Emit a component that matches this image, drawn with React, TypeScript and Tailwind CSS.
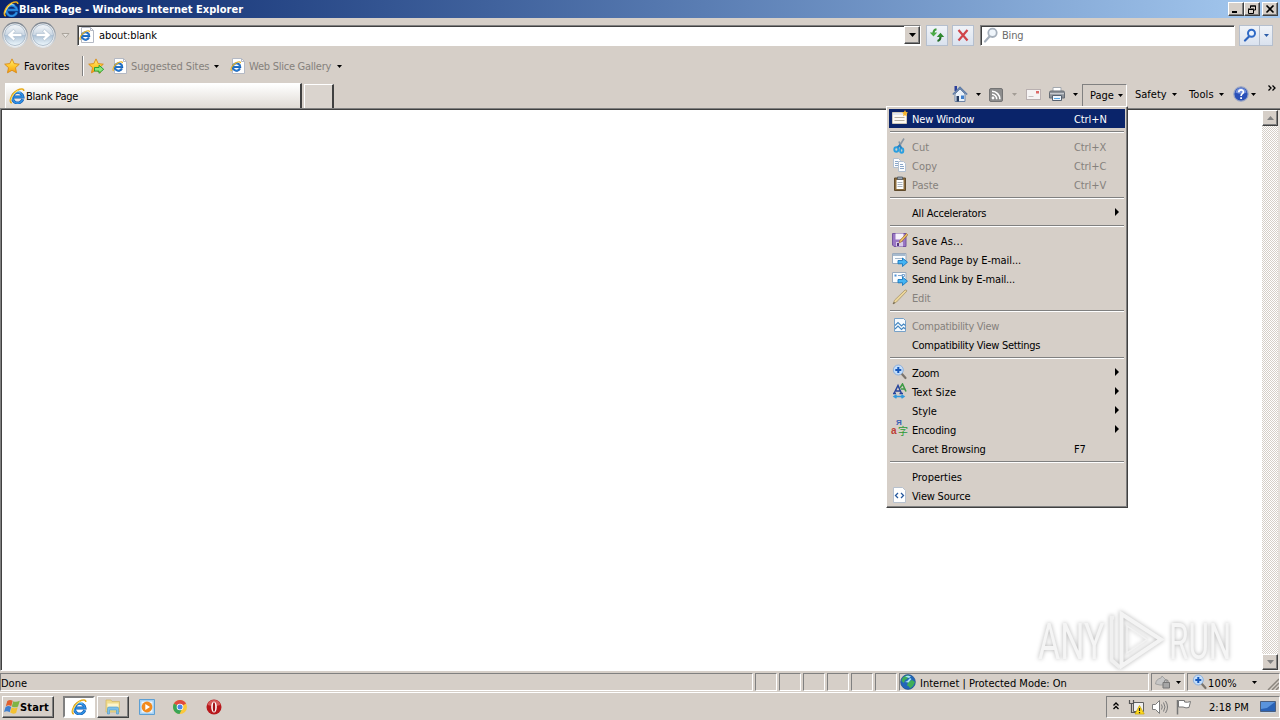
import type { ReactNode } from 'react';
import clsx from 'clsx';

interface MenuEntry {
  label: string;
  icon?: ReactNode;
  hint?: string;
  disabled?: boolean;
  active?: boolean;
  submenu?: boolean;
  spacing?: string;
}

/* ---------- icons ---------- */

function IeIcon({ size = 16 }: { size?: number }) {
  return (
    <svg width={size} height={size} viewBox="0 0 16 16" fill="none" className="shrink-0">
      <path d="M13.800 11.300A5.300 5.300 0 1 1 14 9H5" stroke="#1559ae" strokeWidth="2.900" />
      <path d="M13.800 11.300A5.300 5.300 0 1 1 14 9H5" stroke="#2f92e6" strokeWidth="1.700" />
      <path d="M4.200 6.300A5.300 5.300 0 0 1 11.500 4.300" stroke="#8fdcff" strokeWidth="1.100" />
      <path d="M2.800 15C-.6 14 2.300 6 8.500 2.300c3.500-2 6.500-1.700 6.200.7" stroke="#e8ac1c" strokeWidth="1.600" />
      <path d="M1.900 12.500C2.500 8.500 5.500 4.400 9 2.400" stroke="#fff08a" strokeWidth=".8" />
    </svg>
  );
}

function IePageIcon() {
  return (
    <svg width="16" height="16" viewBox="0 0 16 16" fill="none" className="shrink-0">
      <path d="M2.500.5h9l3 3v12h-12z" fill="#fff" stroke="#b4b9c4" />
      <path d="M11.500.5v3h3" stroke="#b4b9c4" />
      <path d="M9.900 10.500A3.700 3.700 0 1 1 10.200 8.900H4" stroke="#1559ae" strokeWidth="2" />
      <path d="M9.900 10.500A3.700 3.700 0 1 1 10.200 8.900H4" stroke="#2c86da" strokeWidth="1" />
      <path d="M1.500 12.800C0 11 2.800 6 7 4.200c2.200-.9 3.700-.4 3.400.9" stroke="#e8b224" strokeWidth="1.200" />
    </svg>
  );
}

function RoundArrow({ flip }: { flip?: boolean }) {
  return (
    <svg width="26" height="26" viewBox="0 0 26 26" className={clsx('shrink-0', flip && '-scale-x-100')}>
      <defs>
        <linearGradient id="orb" x1="0" y1="0" x2="0" y2="1">
          <stop offset="0" stopColor="#f4f7fa" />
          <stop offset=".48" stopColor="#cbd7e3" />
          <stop offset=".52" stopColor="#aec2d6" />
          <stop offset="1" stopColor="#eef8fd" />
        </linearGradient>
        <linearGradient id="rim" x1="0" y1="0" x2="0" y2="1">
          <stop offset="0" stopColor="#7c848e" />
          <stop offset="1" stopColor="#dfe5ea" />
        </linearGradient>
      </defs>
      <circle cx="13" cy="13" r="12.200" fill="#f7f8f9" stroke="url(#rim)" strokeWidth="1.400" />
      <circle cx="13" cy="13" r="10.500" fill="url(#orb)" stroke="#9eb0c2" strokeWidth=".8" />
      <path d="M5.200 13l6.300-5.700 1.900 1.900-2.200 2.200h8.600v3.200h-8.600l2.200 2.200-1.900 1.900z" fill="#fff" stroke="#a3b5c7" strokeWidth=".6" />
    </svg>
  );
}

const Caret = ({ className = 'fill-black' }: { className?: string }) => (
  <svg width="5" height="3" viewBox="0 0 5 3" className={clsx('shrink-0', className)}>
    <path d="M0 0h5L2.500 3z" />
  </svg>
);

const STAR = 'M8 .9l2.200 4.700 5.100.6-3.800 3.500 1 5.100L8 12.300l-4.500 2.500 1-5.100L.7 6.200l5.100-.6z';

const StarIcon = ({ add }: { add?: boolean }) => (
  <svg width="16" height="16" viewBox="0 0 16 16" className="shrink-0">
    <defs>
      <linearGradient id="gold" x1="0" y1="0" x2="0" y2="1">
        <stop offset="0" stopColor="#fff07a" />
        <stop offset=".55" stopColor="#ffc62b" />
        <stop offset="1" stopColor="#f59a12" />
      </linearGradient>
    </defs>
    <path d={STAR} fill="url(#gold)" stroke="#d98a12" strokeWidth=".9" />
    {add && <path d="M6.500 9.500h4.500v-2.200l4.700 4-4.700 4v-2.200H6.500z" fill="#8be67b" stroke="#1f9a2b" strokeWidth=".9" />}
  </svg>
);

const RefreshIcon = () => (
  <svg width="16" height="16" viewBox="0 0 16 16" fill="none">
    <path d="M7.500 2.200C5.500 2.500 4.500 4 4.500 6" stroke="#3f9a3c" strokeWidth="2" />
    <path d="M.8 5.500h7.400L4.500 9.500z" fill="#4bab47" />
    <path d="M8.500 14c2.200-.5 3-2 3-4" stroke="#226b25" strokeWidth="2" />
    <path d="M7.800 10h7.400l-3.700-4.200z" fill="#2f8a2f" />
  </svg>
);

const StopIcon = () => (
  <svg width="14" height="14" viewBox="0 0 14 14" fill="none">
    <path d="M2.500 2l9 10.500M11.500 2l-9 10.500" stroke="#d0444a" strokeWidth="2.200" />
  </svg>
);

const Magnifier = ({ rim = '#3a78c8', glass = '#e3eefb' }: { rim?: string; glass?: string }) => (
  <svg width="16" height="16" viewBox="0 0 16 16" fill="none" className="shrink-0">
    <path d="M6.500 9.500L2 14.500" stroke={rim} strokeWidth="2.200" strokeLinecap="round" />
    <circle cx="9.500" cy="5.800" r="4.200" fill={glass} stroke={rim} strokeWidth="1.800" />
  </svg>
);

const GoIcon = () => (
  <svg width="14" height="14" viewBox="0 0 14 14" fill="none" className="shrink-0">
    <path d="M6 8.500L2 12.500" stroke="#2b62bd" strokeWidth="2.200" strokeLinecap="round" />
    <circle cx="8.500" cy="5.300" r="3.500" fill="#eaf3fd" stroke="#2f6ac6" strokeWidth="2" />
  </svg>
);

const ZoomIcon = () => (
  <svg width="16" height="16" viewBox="0 0 16 16" fill="none" className="shrink-0">
    <path d="M9.500 9.500l4 4.500" stroke="#7b746c" strokeWidth="2.200" strokeLinecap="round" />
    <circle cx="6.300" cy="6" r="5" fill="#c3ddfa" stroke="#8fb1da" />
    <path d="M6.300 3v6M3.300 6h6" stroke="#1759bb" strokeWidth="2" />
  </svg>
);

const HomeIcon = () => (
  <svg width="16" height="16" viewBox="0 0 16 16">
    <path d="M2.500 0h2.500v5h-2.500z" fill="#2c3f9b" />
    <path d="M3 8l5-5 5 5v7.500H3z" fill="#eaf1f8" stroke="#6f86a8" />
    <path d="M.8 8.500L8 1.400l7.200 7.100" fill="none" stroke="#5f7da8" strokeWidth="1.600" />
    <path d="M4.500 10H7v5.500H4.500z" fill="#23395f" />
    <path d="M9 9.500h3V13H9z" fill="#3f7fcd" />
  </svg>
);

const FeedIcon = () => (
  <svg width="14" height="14" viewBox="0 0 14 14" fill="none">
    <rect x=".5" y=".5" width="13" height="13" rx="1.500" fill="#8d8d8d" stroke="#747474" />
    <circle cx="4" cy="10" r="1.400" fill="#fff" />
    <path d="M3 6.300a4.700 4.700 0 0 1 4.700 4.900M3 3.200a8 8 0 0 1 7.900 8" stroke="#fff" strokeWidth="1.600" />
  </svg>
);

const MailIcon = () => (
  <svg width="15" height="11" viewBox="0 0 15 11">
    <rect x=".5" y=".5" width="14" height="10" fill="#f6f4f4" stroke="#b9b0b0" />
    <path d="M2.500 7.500h5" stroke="#c4c0c0" />
    <path d="M10 2h3v2.500h-3z" fill="#dc6a68" />
  </svg>
);

const PrinterIcon = () => (
  <svg width="16" height="16" viewBox="0 0 16 16">
    <path d="M4 1.500h8V6H4z" fill="#fff" stroke="#a3a8ae" />
    <path d="M.5 6.500q0-1.500 1.500-1.500h12q1.500 0 1.500 1.500V12H.5z" fill="#8d9299" stroke="#666c74" />
    <path d="M1 7h14v1.300H1z" fill="#c6cace" />
    <path d="M3.500 9.500h9v5h-9z" fill="#eff6fd" stroke="#566270" />
    <path d="M5 12.500h6" stroke="#5aa9e6" />
  </svg>
);

const HelpIcon = () => (
  <svg width="16" height="16" viewBox="0 0 16 16">
    <circle cx="8" cy="8" r="7.200" fill="#2a50b8" stroke="#9aa6c4" strokeWidth="1.200" />
    <path d="M2.500 6.500a5.600 5.600 0 0 1 11 0q-5.500 2.500-11 0z" fill="#7492de" />
    <path d="M5.800 6.200c0-3 4.600-3 4.600-.3C10.400 7.800 8.100 7.700 8.100 10" fill="none" stroke="#fff" strokeWidth="1.700" />
    <path d="M7.200 11.200H9V13H7.200z" fill="#fff" />
  </svg>
);

const NewWindowIcon = () => (
  <svg width="16" height="16" viewBox="0 0 16 16">
    <path d="M.5 2.500h14v11H.5z" fill="#fbf9f3" stroke="#cfc9ba" />
    <path d="M1 3h13v2H1z" fill="#dfe6ee" />
    <path d="M2.500 7.500h10M2.500 10.500h10" stroke="#b5ae9f" />
    <path d="M13 0l1 2 2 .5L14.500 4l.3 2.200L13 5.200l-2 1 .5-2.200L10 2.500l2-.5z" fill="#f5b52b" />
  </svg>
);

const CutIcon = () => (
  <svg width="16" height="16" viewBox="0 0 16 16" fill="none">
    <path d="M12 .5L6.500 9.500M7 3.500l2.500 7" stroke="#8a97a3" strokeWidth="1.600" />
    <ellipse cx="4.300" cy="11.500" rx="2" ry="2.300" stroke="#2a9fe0" strokeWidth="1.900" />
    <ellipse cx="9.700" cy="12.500" rx="1.600" ry="2.300" stroke="#2a9fe0" strokeWidth="1.900" />
    <path d="M5.500 9.300l2-2 2 3" stroke="#2a7fc0" strokeWidth="1.700" />
  </svg>
);

const CopyIcon = () => (
  <svg width="16" height="16" viewBox="0 0 16 16">
    <path d="M1.500 1.500h5l2 2v7h-7z" fill="#fbfcfe" stroke="#b3c0d0" />
    <path d="M3 4.500h3M3 6.500h4M3 8.500h3" stroke="#8aa6c8" />
    <path d="M6.500 4.500h5l2 2v8h-7z" fill="#fbfcfe" stroke="#b3c0d0" />
    <path d="M8 7.500h3M8 9.500h4M8 11.500h4" stroke="#8aa6c8" />
  </svg>
);

const PasteIcon = () => (
  <svg width="16" height="16" viewBox="0 0 16 16">
    <path d="M2.500 2h11v12.500h-11z" fill="#8a6a3b" stroke="#5f4a2b" />
    <path d="M4.500 4h7v9h-7z" fill="#fff" />
    <path d="M5.500 6.500h5M5.500 8.500h5M5.500 10.500h5" stroke="#aab4c0" />
    <path d="M5.500 1h5v2.500h-5z" fill="#9aa4b0" stroke="#525b66" strokeWidth=".8" />
  </svg>
);

const SaveIcon = () => (
  <svg width="16" height="16" viewBox="0 0 16 16">
    <path d="M.5 1.500h13.500v13H2L.5 13z" fill="#9a76c4" stroke="#74549f" />
    <path d="M3.500 1.500h8v6h-8z" fill="#f6f1fb" />
    <path d="M4 10h7v4.500H4z" fill="#d8cbe8" />
    <path d="M5 11h2v3H5z" fill="#55367f" />
    <path d="M14.500 1.500l1.300 1.300-6.300 7-2.300 1 .8-2.500z" fill="#f0c26a" stroke="#966a2a" strokeWidth=".7" />
  </svg>
);

const SendIcon = ({ link }: { link?: boolean }) => (
  <svg width="16" height="16" viewBox="0 0 16 16">
    <path d="M.5 2.500h13.500v10H.5z" fill="#fafcfe" stroke="#9aaabc" />
    {link ? (
      <>
        <path d="M2.500 4.500h2v2h-2z" fill="#4a90d9" />
        <path d="M6 5.500h5M10 4.500h2.500v2H10z" stroke="#7fa7d0" fill="none" />
      </>
    ) : (
      <path d="M1 3h12.500v2H1zM3 7h7v1H3z" fill="#a6bace" />
    )}
    <path d="M6 9.500h4.500V7l5 4.200-5 4.300v-2.700H6z" fill="#45b4f3" stroke="#1877bd" strokeWidth=".9" />
  </svg>
);

const EditIcon = () => (
  <svg width="16" height="16" viewBox="0 0 16 16">
    <path d="M1 15l1.500-3.800L13 1q1.500-.5 2 1L4.500 13z" fill="#ecd69a" stroke="#a8946a" strokeWidth=".8" />
    <path d="M1 15l1-2 1 1z" fill="#444" />
  </svg>
);

const BrokenPageIcon = () => (
  <svg width="16" height="16" viewBox="0 0 16 16" fill="none">
    <path d="M2.500 1.500h9l2 2v11h-11z" fill="#f5fafe" stroke="#77a1c8" />
    <path d="M3 8.500l3-3 3.500 3.500 2-2 2 1.500M3 12l3-3 3.500 3.500 2-2 2 1.500" stroke="#4687c0" strokeWidth="1.100" />
  </svg>
);

const TextSizeIcon = () => (
  <svg width="16" height="16" viewBox="0 0 16 16" fill="none">
    <path d="M8 5l2.500-4L14 8.500M9 6h4" stroke="#3f9a46" strokeWidth="1.600" />
    <path d="M2 10.500L6 2.500l3.500 8M4 8h5M1 10.500h3M7.500 10.500H11" stroke="#27449c" strokeWidth="1.500" />
    <path d="M2 13.500h10M4.500 11.800l-2.500 1.700 2.500 1.700M9.500 11.800l2.500 1.700-2.500 1.700" stroke="#3198dc" strokeWidth="1.400" />
  </svg>
);

const EncodingIcon = () => (
  <span className="relative block size-4 font-['Liberation_Sans','Noto_Sans_CJK_SC',sans-serif] leading-none">
    <span className="absolute -top-0.5 left-1 text-[8px] font-bold text-[#3a62b5]">Я</span>
    <span className="absolute top-[5px] -left-px text-[10px] font-bold text-[#bd4036]">a</span>
    <span className="absolute top-[6px] left-[6px] text-[10px] text-[#2c9a35]">字</span>
  </span>
);

const SourceIcon = () => (
  <svg width="16" height="16" viewBox="0 0 16 16" fill="none">
    <path d="M1.500.5h9l3 3v12h-12z" fill="#fff" stroke="#b7c1ce" />
    <path d="M6 6L3.500 8.500 6 11M9 6l2.500 2.500L9 11" stroke="#26589d" strokeWidth="1.300" />
  </svg>
);

const GlobeIcon = () => (
  <svg width="16" height="16" viewBox="0 0 16 16">
    <circle cx="8" cy="8" r="7.400" fill="#2166b8" stroke="#1c4a84" strokeWidth=".6" />
    <path d="M2.500 4q3.500-3.500 6.500-2.500L7 5l-2 1-1 3-2.500-2zM8 8l4-2 3 2-2 4-3 2.500-1-2-2-1z" fill="#3fae57" />
    <path d="M5 2.500q3-1.500 6 0l-2 1.500zM5 8q3-1 5-4l1.500 1-3 3.500z" fill="#a9e4f2" />
  </svg>
);

const PrivacyIcon = () => (
  <svg width="16" height="16" viewBox="0 0 16 16">
    <path d="M.5 10Q1 5 6 4l1-2 5 5-4 4H5z" fill="#c6c6c6" stroke="#999" strokeWidth=".8" />
    <path d="M9.500 8.500V7q2-2.500 3.500 0v1.500" fill="none" stroke="#888" strokeWidth="1.200" />
    <path d="M8 8.500h6.500V14H8z" fill="#a6a6a6" stroke="#777" />
  </svg>
);

const StartIcon = () => (
  <svg width="16" height="16" viewBox="0 0 16 16" className="shrink-0">
    <path d="M3.300 2q2.700-2 5.400-.2L7.300 7.200Q4.800 5.400 1.800 7.200z" fill="#e0602f" />
    <path d="M9.300 2.300q2.700 1.300 6.500-.6L14 7.500q-2.800 1.700-6.200 0z" fill="#7fb445" />
    <path d="M1.600 7.900q2.900-1.800 5.600 0L5.700 13.200q-2.700-1.700-5.700-.2z" fill="#3f7fcf" />
    <path d="M7.700 8.300q2.800 1.700 6 0l-1.600 5.600q-2.900 1.600-5.900-.3z" fill="#f3c132" />
  </svg>
);

const FolderIcon = () => (
  <svg width="16" height="16" viewBox="0 0 16 16">
    <path d="M1 1h5l1 1.500h7.500V13H1z" fill="#f0dc8c" stroke="#d2b660" strokeWidth=".7" />
    <path d="M2.500 4.500h11V8h-11z" fill="#fdf5cc" />
    <path d="M2.500 15V9.500Q2.500 8 4 8h8q1.500 0 1.500 1.500V15h-2v-4h-7v4z" fill="#7cc0ea" stroke="#4b98cb" strokeWidth=".6" />
  </svg>
);

const PlayerIcon = () => (
  <svg width="16" height="16" viewBox="0 0 16 16">
    <path d="M.5.5h15v15H.5z" fill="#a7d2f4" stroke="#5d9fd3" />
    <path d="M2.500 2.500h11v11h-11z" fill="#eef6fc" />
    <circle cx="8" cy="8" r="5.400" fill="#f28a1d" />
    <path d="M6.300 5v6L11 8z" fill="#fff" />
  </svg>
);

const ChromeIcon = () => (
  <svg width="14" height="14" viewBox="0 0 14 14">
    <circle cx="7" cy="7" r="7" fill="#fbc83a" />
    <path d="M7 7L.9 3.600A7 7 0 0 1 13.100 3.600z" fill="#e04a3f" />
    <path d="M7 7L.9 3.600A7 7 0 0 0 6.500 14L9 9z" fill="#3aa556" />
    <circle cx="7" cy="7" r="3.300" fill="#fff" />
    <circle cx="7" cy="7" r="2.500" fill="#4a86e8" />
  </svg>
);

const OperaIcon = () => (
  <svg width="16" height="16" viewBox="0 0 16 16">
    <circle cx="8" cy="8" r="7.500" fill="#b8181c" />
    <path d="M1.500 6a6.700 6.700 0 0 1 13 0Q8 8 1.500 6z" fill="#d65a59" />
    <ellipse cx="8" cy="8" rx="2.800" ry="5.500" fill="#fff" />
    <ellipse cx="8" cy="8" rx="1.200" ry="4.700" fill="#a31317" />
  </svg>
);

const NetworkIcon = () => (
  <svg width="17" height="16" viewBox="0 0 17 16" fill="none">
    <path d="M5.500 3.500h10v9h-10z" fill="#f0f0f0" stroke="#606060" />
    <path d="M1.500 1v3.500h4V1M3.500 4.500v9h6" stroke="#555" strokeWidth="1.200" />
    <path d="M11.500 6.500l4.700 8.500H7z" fill="#ffd91f" stroke="#c9a500" strokeWidth=".7" />
    <path d="M11.500 9v3M11.500 13v1.200" stroke="#222" strokeWidth="1.200" />
  </svg>
);

const VolumeIcon = () => (
  <svg width="16" height="16" viewBox="0 0 16 16" fill="none" stroke="#7c7c7c">
    <path d="M.5 5.500h3l4-4v13l-4-4h-3z" fill="#fff" />
    <path d="M9.500 5.500q1.500 2.500 0 5M11.500 3.500q3 4.500 0 9M13.500 2q4 6 0 12" />
  </svg>
);

const FlagIcon = () => (
  <svg width="16" height="16" viewBox="0 0 16 16" fill="#fff" stroke="#777">
    <path d="M1.500 1v14.500" strokeWidth="1.500" />
    <path d="M2.500 1.500h6v1.500q3 .8 6-.5l-1.500 6q-3 1-6-.5h-4.500z" />
  </svg>
);

const DesktopIcon = () => (
  <svg width="16" height="14" viewBox="0 0 16 14">
    <path d="M.5 1.500h15v10H.5z" fill="#2a62b5" stroke="#4b5f7e" />
    <path d="M1 2h14l-8 6-6 1z" fill="#5a94dc" />
    <path d="M1 12.500h14" stroke="#c9d6e6" />
  </svg>
);

/* ---------- building blocks ---------- */

const raised = 'border border-t-white border-l-white border-r-[#404040] border-b-[#404040] shadow-[inset_-1px_-1px_0_#808080]';
const sunken = 'border border-t-[#808080] border-l-[#808080] border-r-white border-b-white';

function TitleButton({ children }: { children: ReactNode }) {
  return (
    <div className={clsx('flex h-[14px] w-4 items-center justify-center bg-[#d6cfc8]', raised)}>
      <svg width="10" height="9" viewBox="0 0 10 9" fill="none" stroke="#000">
        {children}
      </svg>
    </div>
  );
}

const glassButton = 'flex items-center justify-center border border-[#b5bfce] bg-gradient-to-b from-[#f0f3f8] to-[#dae2ee]';

const menuGroups: MenuEntry[][] = [
  [{ label: 'New Window', icon: <NewWindowIcon />, hint: 'Ctrl+N', active: true, spacing: 'tracking-[-0.15px]' }],
  [
    { label: 'Cut', icon: <CutIcon />, hint: 'Ctrl+X', disabled: true },
    { label: 'Copy', icon: <CopyIcon />, hint: 'Ctrl+C', disabled: true },
    { label: 'Paste', icon: <PasteIcon />, hint: 'Ctrl+V', disabled: true },
  ],
  [{ label: 'All Accelerators', submenu: true, spacing: 'tracking-[-0.17px]' }],
  [
    { label: 'Save As...', icon: <SaveIcon />, spacing: 'tracking-[0.25px]' },
    { label: 'Send Page by E-mail...', icon: <SendIcon />, spacing: 'tracking-[-0.08px]' },
    { label: 'Send Link by E-mail...', icon: <SendIcon link />, spacing: 'tracking-[-0.2px]' },
    { label: 'Edit', icon: <EditIcon />, disabled: true, spacing: 'tracking-[-0.2px]' },
  ],
  [
    { label: 'Compatibility View', icon: <BrokenPageIcon />, disabled: true, spacing: 'tracking-[-0.3px]' },
    { label: 'Compatibility View Settings', spacing: 'tracking-[-0.3px]' },
  ],
  [
    { label: 'Zoom', icon: <ZoomIcon />, submenu: true, spacing: 'tracking-[-0.4px]' },
    { label: 'Text Size', icon: <TextSizeIcon />, submenu: true, spacing: 'tracking-[0.1px]' },
    { label: 'Style', submenu: true },
    { label: 'Encoding', icon: <EncodingIcon />, submenu: true, spacing: 'tracking-[-0.2px]' },
    { label: 'Caret Browsing', hint: 'F7', spacing: 'tracking-[-0.1px]' },
  ],
  [
    { label: 'Properties' },
    { label: 'View Source', icon: <SourceIcon />, spacing: 'tracking-[-0.2px]' },
  ],
];

function MenuRow({ item }: { item: MenuEntry }) {
  return (
    <div
      className={clsx(
        'flex h-[19px] items-center pl-[3px]',
        item.active && 'bg-[#0a246a] text-white',
        item.disabled && 'text-[#85817c]',
      )}
    >
      <span className="w-5 shrink-0 pb-0.5">{item.icon}</span>
      <span className={clsx('w-[162px] pt-px whitespace-nowrap', item.spacing)}>{item.label}</span>
      <span className="w-[41px] pt-px tracking-[-0.1px]">{item.hint}</span>
      {item.submenu && (
        <svg width="4" height="8" viewBox="0 0 4 8" className="mb-0.5">
          <path d="M0 0l4 4-4 4z" />
        </svg>
      )}
    </div>
  );
}

function PageMenu() {
  return (
    <div className={clsx('absolute top-[106px] left-[886px] z-10 w-[242px] bg-[#d6cfc8] p-0.5', raised)}>
      {menuGroups.map((group, i) => (
        <div key={i}>
          {i > 0 && <div className="mx-px mt-[3px] mb-1 h-0.5 border-t border-b border-t-[#808080] border-b-white" />}
          {group.map((item) => (
            <MenuRow key={item.label} item={item} />
          ))}
        </div>
      ))}
    </div>
  );
}

function ScrollButton({ up }: { up?: boolean }) {
  return (
    <div className={clsx('flex h-4 items-center justify-center bg-[#d6cfc8]', raised)}>
      <svg width="7" height="4" viewBox="0 0 7 4" className={clsx('fill-[#808080]', up && 'rotate-180')}>
        <path d="M0 0h7L3.500 4z" />
      </svg>
    </div>
  );
}

function Watermark() {
  return (
    <div className="absolute top-[609px] left-[1038px] flex h-[62px] items-center font-['Roboto',sans-serif] text-[50px] leading-none text-[#f5f5f5] drop-shadow-[0_0_2px_#b4b4b4]">
      <span className="inline-block w-[67px] origin-left scale-x-[0.68] pt-1">ANY</span>
      <svg width="60" height="62" viewBox="0 0 60 62" fill="none" className="shrink-0">
        <path d="M9 8.500H6.500V51L15 58.500" stroke="#f0f0f0" strokeWidth="4" />
        <path d="M16.500 5v52L56 30.500z" stroke="#f4f4f4" strokeWidth="4" />
        <path d="M22 17v27l20-13.500z" stroke="#f2f2f2" strokeWidth="1.500" />
      </svg>
      <span className="ml-1 inline-block w-[64px] origin-left scale-x-[0.63] pt-1">RUN</span>
    </div>
  );
}

/* ---------- page ---------- */

export default function App() {
  return (
    <div className="relative flex h-[720px] w-[1280px] flex-col overflow-hidden bg-[#d6cfc8] font-['DejaVu_Sans_Condensed','DejaVu_Sans',sans-serif] text-[11px] leading-[13px] text-black">
      {/* title bar */}
      <div className="flex h-[18px] shrink-0 items-center bg-gradient-to-r from-[#0a246a] to-[#a6caf0] pr-0.5 pl-[3px]">
        <IeIcon />
        <span className="font-bold tracking-[0.04px] text-white">Blank Page - Windows Internet Explorer</span>
        <div className="ml-auto flex">
          <TitleButton>
            <path d="M1 7h5" strokeWidth="2" />
          </TitleButton>
          <TitleButton>
            <path d="M3.500 3V1h5v4H7M3 1h6" />
            <path d="M1.500 4.500h5v4h-5zM1 4h6" />
          </TitleButton>
          <div className="ml-0.5">
            <TitleButton>
              <path d="M1.500.5l7 7M8.500.5l-7 7" strokeWidth="1.600" />
            </TitleButton>
          </div>
        </div>
      </div>

      {/* address and search */}
      <div className="flex h-[34px] shrink-0 items-center pl-0.5">
        <div className="flex gap-0.5">
          <RoundArrow />
          <RoundArrow flip />
        </div>
        <svg width="9" height="5" viewBox="0 0 9 5" className="ml-[5px] fill-[#e9e5e0] stroke-[#aaa49c]">
          <path d="M1 .5h7L4.500 4.500z" />
        </svg>
        <div className={clsx('ml-[7px] flex h-[21px] w-[844px] items-center bg-white pl-px', sunken, 'shadow-[inset_1px_1px_0_#404040]')}>
          <IePageIcon />
          <span className="ml-1 pt-px tracking-[-0.1px]">about:blank</span>
          <div className={clsx('ml-auto flex h-[18px] w-4 items-center justify-center bg-[#d6cfc8]', raised)}>
            <svg width="7" height="4" viewBox="0 0 7 4">
              <path d="M0 0h7L3.500 4z" />
            </svg>
          </div>
        </div>
        <div className={clsx('ml-[5px] h-[21px] w-[22px]', glassButton)}>
          <RefreshIcon />
        </div>
        <div className={clsx('ml-1 h-[21px] w-[22px]', glassButton)}>
          <StopIcon />
        </div>
        <div className={clsx('ml-[6px] flex h-[21px] w-[255px] items-center bg-white pl-0.5', sunken, 'shadow-[inset_1px_1px_0_#404040]')}>
          <Magnifier rim="#a6b0bc" glass="#eff5fb" />
          <span className="ml-[3px] pt-px tracking-[-0.2px] text-[#6b6b6b]">Bing</span>
        </div>
        <div className={clsx('ml-[4px] h-[21px] w-[21px]', glassButton)}>
          <GoIcon />
        </div>
        <div className={clsx('-ml-px h-[21px] w-[14px]', glassButton)}>
          <Caret className="fill-[#2b5ca8]" />
        </div>
      </div>

      {/* favourites */}
      <div className="flex h-[30px] shrink-0 items-center pb-0.5 pl-1">
        <StarIcon />
        <span className="ml-1 w-[46px] tracking-[0.1px] whitespace-nowrap">Favorites</span>
        <div className="ml-3 h-5 w-0.5 border-r border-l border-r-white border-l-[#808080]" />
        <div className="ml-1">
          <StarIcon add />
        </div>
        <div className="ml-2">
          <IePageIcon />
        </div>
        <span className="ml-[3px] w-[79px] pt-px tracking-[-0.1px] whitespace-nowrap text-[#85817c]">Suggested Sites</span>
        <span className="ml-1"><Caret /></span>
        <div className="ml-[11px]">
          <IePageIcon />
        </div>
        <span className="ml-[3px] w-[83px] pt-px tracking-[-0.25px] whitespace-nowrap text-[#85817c]">Web Slice Gallery</span>
        <span className="ml-[5px]"><Caret /></span>
      </div>

      {/* tabs and command bar */}
      <div className="flex h-[26px] shrink-0 items-end pl-[5px]">
        <div className="flex h-[25px] w-[297px] items-center border-t border-r-2 border-l border-t-white border-r-[#404040] border-l-white bg-gradient-to-b from-white to-[#e0dbd5] pl-[3px]">
          <IeIcon />
          <span className="ml-px tracking-[-0.25px]">Blank Page</span>
        </div>
        <div className="ml-0.5 h-6 w-[30px] border-t border-r-2 border-l border-t-white border-r-[#404040] border-l-white bg-[#dad4ce]" />
        <div className="ml-auto flex h-[26px] items-center pb-0.5">
          <HomeIcon />
          <span className="ml-2"><Caret /></span>
          <span className="ml-[8px] pt-0.5"><FeedIcon /></span>
          <span className="ml-[9px]"><Caret className="fill-[#a39d96]" /></span>
          <span className="ml-[9px]"><MailIcon /></span>
          <span className="ml-[8px]"><PrinterIcon /></span>
          <span className="ml-[8px]"><Caret /></span>
          <div className={clsx('-mb-0.5 ml-1 flex h-6 w-[45px] items-center self-end pb-0.5 pl-[7px]', sunken)}>
            <span className="w-[26px]">Page</span>
            <span className="ml-0.5 pt-px"><Caret /></span>
          </div>
          <span className="ml-2 w-[33px]">Safety</span>
          <span className="ml-1"><Caret /></span>
          <span className="ml-3 w-[26px] tracking-[0.1px]">Tools</span>
          <span className="ml-1"><Caret /></span>
          <span className="ml-[9px]"><HelpIcon /></span>
          <span className="ml-0.5"><Caret /></span>
          <svg width="9" height="6" viewBox="0 0 9 6" fill="none" className="mr-[3px] mb-3 ml-3 stroke-black">
            <path d="M.5.5L3 3 .5 5.500M4.500.5L7 3 4.500 5.500" strokeWidth="1.300" />
          </svg>
        </div>
      </div>

      {/* document */}
      <div className="flex h-[563px] shrink-0 border-t border-b border-l border-t-[#808080] border-b-white border-l-[#808080]">
        <div className="flex flex-1 border-t border-l border-[#404040] bg-white">
          <div className="flex-1" />
          <div className="flex w-4 flex-col bg-[repeating-conic-gradient(#ffffff_0_25%,#d6cfc8_0_50%)] bg-size-[2px_2px]">
            <ScrollButton up />
            <div className="flex-1" />
            <ScrollButton />
          </div>
          <div className="w-0.5 bg-[#e4dfda]" />
        </div>
      </div>

      {/* status bar */}
      <div className="flex h-[22px] shrink-0 items-center gap-0.5 border-b border-white pt-0.5 pb-px">
        <div className={clsx('flex h-full w-[753px] items-center pt-0.5', sunken)}>Done</div>
        {[0, 1, 2, 3, 4, 5].map((pane) => (
          <div key={pane} className={clsx('h-full w-[22px]', sunken)} />
        ))}
        <div className={clsx('flex h-full w-[250px] items-center', sunken)}>
          <GlobeIcon />
          <span className="ml-1 pt-0.5 whitespace-nowrap">Internet | Protected Mode: On</span>
        </div>
        <div className={clsx('flex h-full w-[34px] items-center pl-[3px]', sunken)}>
          <PrivacyIcon />
          <span className="ml-[5px]"><Caret /></span>
        </div>
        <div className={clsx('flex h-full flex-1 items-center pl-1', sunken)}>
          <ZoomIcon />
          <span className="w-[31px] pt-0.5 tracking-[0.15px]">100%</span>
          <span className="ml-[13px]"><Caret /></span>
          <svg width="12" height="12" viewBox="0 0 12 12" fill="none" className="mt-1 ml-auto stroke-[#8b867f]">
            <path d="M1 12L12 1M5 12l7-7M9 12l3-3" strokeWidth="1.500" />
          </svg>
        </div>
      </div>

      {/* taskbar */}
      <div className="flex flex-1 items-center pl-0.5">
        <div className={clsx('flex h-[22px] w-[52px] items-center pl-px', raised)}>
          <StartIcon />
          <span className="pt-px font-bold tracking-[0.15px]">Start</span>
        </div>
        <div className={clsx('ml-[9px] flex h-[22px] w-[32px] items-center justify-center border-2 bg-white', sunken)}>
          <IeIcon />
        </div>
        <div className={clsx('ml-0.5 flex h-[22px] w-[32px] items-center justify-center', raised)}>
          <FolderIcon />
        </div>
        <span className="ml-[10px]"><PlayerIcon /></span>
        <span className="ml-[18px]"><ChromeIcon /></span>
        <span className="ml-[19px]"><OperaIcon /></span>
        <div className={clsx('ml-auto flex h-[22px] w-[174px] items-center pl-1.5', sunken)}>
          <svg width="6" height="8" viewBox="0 0 6 8" fill="none" className="mb-0.5 stroke-black">
            <path d="M.5 3.500L3 1l2.500 2.500M.5 7L3 4.500 5.500 7" strokeWidth="1.300" />
          </svg>
          <span className="ml-[9px]"><NetworkIcon /></span>
          <span className="ml-[7px]"><VolumeIcon /></span>
          <span className="ml-[8px]"><FlagIcon /></span>
          <span className="ml-[17px] w-10 pt-px whitespace-nowrap">2:18 PM</span>
          <span className="ml-[11px]"><DesktopIcon /></span>
        </div>
      </div>

      <Watermark />
      <PageMenu />
    </div>
  );
}
